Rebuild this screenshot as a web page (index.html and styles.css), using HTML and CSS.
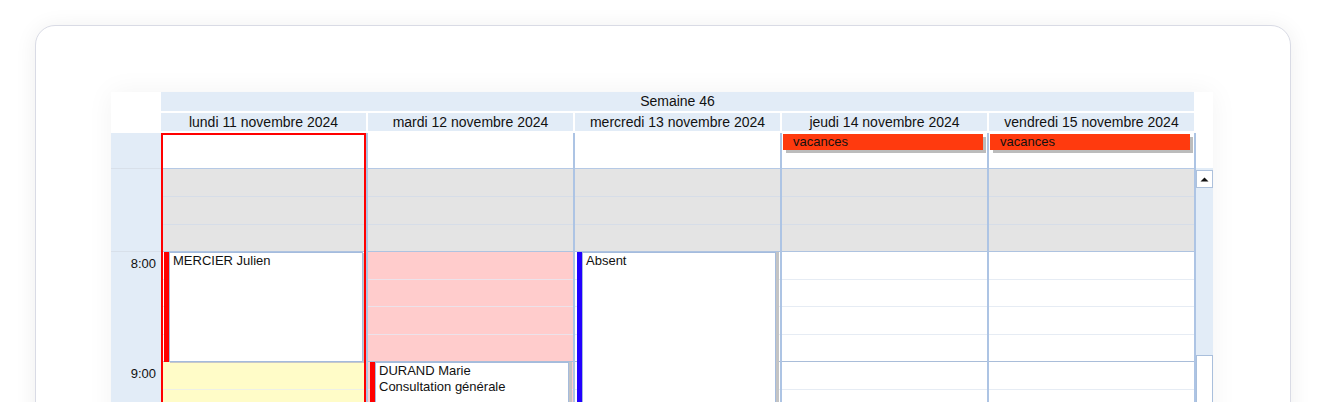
FILE: index.html
```html
<!DOCTYPE html>
<html lang="fr">
<head>
<meta charset="utf-8">
<title>Semaine 46</title>
<link rel="stylesheet" href="styles.css">
</head>
<body>
<div class="card">
  <div class="cal">
    <div class="cal-head">
      <div class="week">Semaine 46</div>
      <div class="days">
        <div>lundi 11 novembre 2024</div>
        <div>mardi 12 novembre 2024</div>
        <div>mercredi 13 novembre 2024</div>
        <div>jeudi 14 novembre 2024</div>
        <div>vendredi 15 novembre 2024</div>
      </div>
    </div>
    <div class="cal-body">
      <div class="times">
        <div class="t-allday"></div>
        <div class="t-early"></div>
        <div class="t-hour">8:00</div>
        <div class="t-hour">9:00</div>
      </div>

      <div class="day selected">
        <div class="allday"></div>
        <div class="slot off"></div><div class="slot off"></div><div class="slot off h"></div>
        <div class="slot q"></div><div class="slot q"></div><div class="slot q"></div><div class="slot q h"></div>
        <div class="slot q yellow"></div><div class="slot q yellow"></div><div class="slot q yellow"></div><div class="slot q yellow h"></div>
        <div class="event ev-mercier"><span class="bar red"></span><div class="ev-body">MERCIER Julien</div></div>
        <div class="sel-frame"></div>
      </div>

      <div class="day">
        <div class="allday"></div>
        <div class="slot off"></div><div class="slot off"></div><div class="slot off h"></div>
        <div class="slot q pink"></div><div class="slot q pink"></div><div class="slot q pink"></div><div class="slot q pink h"></div>
        <div class="slot q pink"></div><div class="slot q pink"></div><div class="slot q pink"></div><div class="slot q pink h"></div>
        <div class="event ev-durand"><span class="bar red"></span><div class="ev-body">DURAND Marie<br>Consultation générale</div></div>
      </div>

      <div class="day">
        <div class="allday"></div>
        <div class="slot off"></div><div class="slot off"></div><div class="slot off h"></div>
        <div class="slot q"></div><div class="slot q"></div><div class="slot q"></div><div class="slot q h"></div>
        <div class="slot q"></div><div class="slot q"></div><div class="slot q"></div><div class="slot q h"></div>
        <div class="event ev-absent"><span class="bar blue"></span><div class="ev-body">Absent</div></div>
      </div>

      <div class="day">
        <div class="allday"><div class="vac">vacances</div></div>
        <div class="slot off"></div><div class="slot off"></div><div class="slot off h"></div>
        <div class="slot q"></div><div class="slot q"></div><div class="slot q"></div><div class="slot q h"></div>
        <div class="slot q"></div><div class="slot q"></div><div class="slot q"></div><div class="slot q h"></div>
      </div>

      <div class="day">
        <div class="allday"><div class="vac">vacances</div></div>
        <div class="slot off"></div><div class="slot off"></div><div class="slot off h"></div>
        <div class="slot q"></div><div class="slot q"></div><div class="slot q"></div><div class="slot q h"></div>
        <div class="slot q"></div><div class="slot q"></div><div class="slot q"></div><div class="slot q h"></div>
      </div>

      <div class="scroll">
        <div class="scroll-top"></div>
        <div class="scroll-track">
          <div class="scroll-btn"><svg width="9" height="5" viewBox="0 0 9 5"><path d="M0.5 4.5 L4.5 0.5 L8.5 4.5 Z" fill="#111"/></svg></div>
          <div class="scroll-thumb"></div>
        </div>
      </div>
    </div>
  </div>
</div>
</body>
</html>
```

FILE: styles.css
```css
* { box-sizing: border-box; }
html, body {
  margin: 0;
  padding: 0;
  background: #ffffff;
  overflow: hidden;
  height: 402px;
}
body {
  font-family: "Liberation Sans", Arial, sans-serif;
  color: #111;
}
.card {
  margin: 25px 0 0 35px;
  width: 1256px;
  height: 640px;
  border: 1px solid #d9dbe5;
  border-radius: 20px;
  background: #fff;
  box-shadow: 0 2px 22px rgba(0, 0, 0, 0.07);
  padding: 66px 0 0 75px;
}
.cal {
  width: 1102px;
  height: 560px;
  background: #fff;
  box-shadow: 0 0 26px rgba(0, 0, 0, 0.05);
}
.cal-head {
  padding-left: 50px;
  width: 1083px;
  display: flex;
  flex-direction: column;
  gap: 2px;
  padding-bottom: 2px;
  font-size: 14px;
}
.week {
  height: 19px;
  line-height: 19px;
  background: #e2ecf7;
  text-align: center;
}
.days {
  display: grid;
  grid-template-columns: repeat(5, 1fr);
  gap: 2px;
  height: 18px;
}
.days > div {
  background: #e2ecf7;
  text-align: center;
  line-height: 18px;
  white-space: nowrap;
}
.cal-body {
  display: grid;
  grid-template-columns: 50px repeat(5, 207px) 17px;
  height: 420px;
  font-size: 13px;
}
.times {
  background: #e2ecf7;
}
.t-allday {
  height: 36px;
  border-bottom: 1px solid #d8e0ea;
}
.t-early {
  height: 83px;
  border-bottom: 1px solid #d8e0ea;
}
.t-hour {
  height: 110px;
  text-align: right;
  padding: 4px 5px 0 0;
  line-height: 16px;
}
.day {
  position: relative;
  border-right: 2px solid #adc4e4;
  overflow: hidden;
}
.allday {
  height: 36px;
  border-bottom: 1px solid #b5c9e5;
  background: #fff;
  padding: 1px 4px 0 1px;
}
.slot {
  height: 28px;
  border-bottom: 1px solid #e6ecf4;
  background: #fff;
}
.slot.off.h { height: 27px; }
.slot.q { height: 27.5px; }
.slot.off {
  background: #e4e4e4;
  border-bottom-color: #d6dde8;
}
.slot.pink {
  background: #ffcccc;
  border-bottom-color: #ece2ea;
}
.slot.yellow {
  background: #fffcc8;
  border-bottom-color: #eef0e6;
}
.slot.h { border-bottom-color: #a9bdd9; }
.slot.off.h { border-bottom-color: #aec3e0; }

.sel-frame {
  position: absolute;
  top: 0; left: 0; right: 0; bottom: 0;
  border: 2px solid #ff0000;
  pointer-events: none;
}
.event {
  position: absolute;
  display: flex;
}
.bar {
  width: 5px;
  flex: none;
}
.bar.red { background: #ff0000; }
.bar.blue { background: #2200ff; }
.ev-body {
  flex: 1;
  background: #fff;
  border: 1px solid #a4bbdd;
  padding: 0 3px;
  line-height: 16px;
  white-space: nowrap;
  overflow: hidden;
}
.ev-mercier {
  top: 119px; left: 3px; right: 3px; height: 110px;
}
.ev-mercier .ev-body { box-shadow: 1px 1px 0 #c8c8c8; }
.ev-durand {
  top: 229px; left: 2px; right: 4px; height: 200px;
}
.ev-durand .ev-body { box-shadow: 3px 0 0 #c4c4c4; }
.ev-absent {
  top: 119px; left: 2px; right: 4px; height: 300px;
}
.ev-absent .ev-body { box-shadow: 3px 0 0 #c4c4c4; }
.vac {
  height: 16px;
  line-height: 15px;
  background: #ff3a0e;
  padding-left: 10px;
  box-shadow: 3px 3px 0 #bcbcbc;
}
.scroll {
  display: flex;
  flex-direction: column;
}
.scroll-top {
  height: 35px;
  background: #fff;
  flex: none;
}
.scroll-track {
  flex: 1;
  background: #e2ecf7;
  padding-top: 1px;
  display: flex;
  flex-direction: column;
}
.scroll-btn {
  height: 18px;
  margin-top: 1px;
  background: #fff;
  border: 1px solid #adc1dc;
  display: flex;
  align-items: center;
  justify-content: center;
}
.scroll-btn svg { display: block; }
.scroll-thumb {
  margin-top: 167px;
  flex: 1;
  background: #fff;
  border: 1px solid #a9bfdc;
}
```
